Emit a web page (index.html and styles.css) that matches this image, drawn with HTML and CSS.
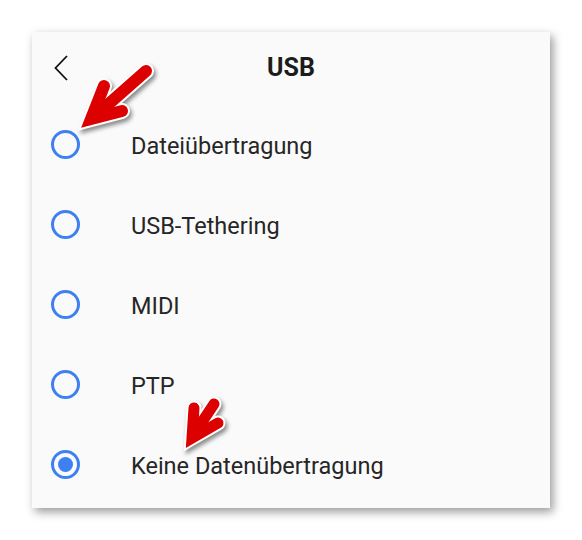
FILE: index.html
```html
<!DOCTYPE html>
<html lang="de">
<head>
    <meta charset="UTF-8">
    <meta name="viewport" content="width=device-width, initial-scale=1.0">
    <title>USB</title>
    <link rel="stylesheet" href="styles.css">
</head>
<body>
    <div class="card">
        <header class="bar">
            <svg class="back" width="14" height="26" viewBox="0 0 14 26">
                <polyline points="13,1 1.5,13 13,25" fill="none" stroke="#111" stroke-width="1.8"/>
            </svg>
            <h1 class="title">USB</h1>
        </header>
        <ul class="options">
            <li class="option"><span class="radio"></span><span class="label">Dateiübertragung</span></li>
            <li class="option"><span class="radio"></span><span class="label">USB-Tethering</span></li>
            <li class="option"><span class="radio"></span><span class="label">MIDI</span></li>
            <li class="option"><span class="radio"></span><span class="label">PTP</span></li>
            <li class="option"><span class="radio checked"></span><span class="label">Keine Datenübertragung</span></li>
        </ul>
    </div>

    <!-- annotation arrows drawn over the screenshot -->
    <svg class="arrows" width="582" height="540" viewBox="0 0 582 540">
        <g class="arrow">
            <g stroke="#fff" stroke-width="16" fill="none" stroke-linecap="round" stroke-linejoin="miter">
                <polyline points="104,86 91,119 122,111"/>
                <line x1="95" y1="116" x2="146" y2="71"/>
            </g>
            <g stroke="#dc0000" stroke-width="12" fill="none" stroke-linecap="round" stroke-linejoin="miter">
                <polyline points="104,86 91,119 122,111"/>
                <line x1="95" y1="116" x2="146" y2="71"/>
            </g>
        </g>
        <g class="arrow">
            <g stroke="#fff" stroke-width="15" fill="none" stroke-linecap="round" stroke-linejoin="miter">
                <polyline points="194,408 192,438 218,423"/>
                <line x1="194" y1="434" x2="214" y2="404"/>
            </g>
            <g stroke="#dc0000" stroke-width="11" fill="none" stroke-linecap="round" stroke-linejoin="miter">
                <polyline points="194,408 192,438 218,423"/>
                <line x1="194" y1="434" x2="214" y2="404"/>
            </g>
        </g>
    </svg>
</body>
</html>
```

FILE: styles.css
```css
body {
    margin: 0;
    padding: 32px;
    background: #ffffff;
    font-family: Roboto, "Noto Sans", sans-serif;
    position: relative;
    width: 518px;
}
.card {
    width: 518px;
    height: 476px;
    background: #fafafa;
    box-shadow: 3px 4px 9px rgba(0, 0, 0, 0.4);
}
.bar {
    height: 72px;
    display: flex;
    align-items: center;
    justify-content: center;
    position: relative;
}
.back {
    position: absolute;
    left: 22px;
    top: 23px;
}
.title {
    margin: 0;
    font-size: 25px;
    font-weight: 700;
    color: #1c1c1c;
    line-height: 72px;
}
.options {
    list-style: none;
    margin: 0;
    padding: 0;
}
.option {
    height: 80px;
    display: flex;
    align-items: center;
    padding-left: 19px;
}
.radio {
    box-sizing: border-box;
    width: 29px;
    height: 29px;
    border: 3px solid #3d80f2;
    border-radius: 50%;
    display: flex;
    align-items: center;
    justify-content: center;
    margin-right: 51px;
}
.radio.checked::after {
    content: '';
    width: 15px;
    height: 15px;
    border-radius: 50%;
    background: #3d80f2;
}
.label {
    font-size: 23.5px;
    color: #262626;
    padding-top: 3px;
}
/* red markers lying over the list */
.arrows {
    position: absolute;
    left: 0;
    top: 0;
    pointer-events: none;
}
.arrow {
    filter: drop-shadow(2px 3px 2px rgba(0, 0, 0, 0.45));
}
```
